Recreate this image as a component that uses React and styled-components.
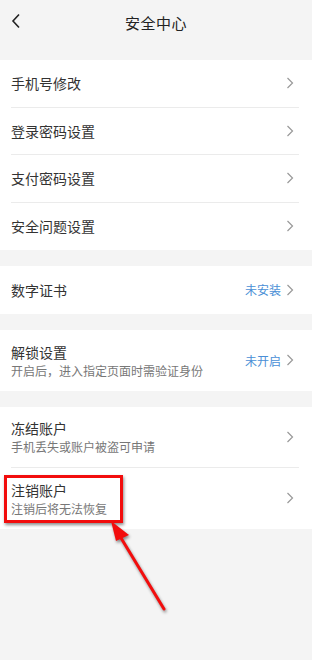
import React from "react";
import styled, { createGlobalStyle } from "styled-components";

const GlobalStyle = createGlobalStyle`
  html, body {
    margin: 0;
    padding: 0;
    background: #f4f4f4;
    font-family: "Noto Sans CJK SC", "Noto Sans", sans-serif;
  }
`;

const Page = styled.div`
  position: relative;
  width: 312px;
  min-height: 660px;
  background: #f4f4f4;
  overflow: hidden;
`;

const Header = styled.div`
  height: 44px;
  display: flex;
  align-items: center;
  justify-content: center;
  position: relative;
  margin-bottom: 16px;
`;

const BackBtn = styled.div`
  position: absolute;
  left: 8px;
  top: 12px;
  width: 16px;
  height: 18px;
  display: flex;
  align-items: center;
  justify-content: center;
`;

const Title = styled.div`
  font-size: 15px;
  color: #222;
  letter-spacing: 0.5px;
`;

const Section = styled.div`
  background: #fff;
  padding: 0 13px 0 11px;
  margin-bottom: 16px;
`;

const Row = styled.div`
  height: ${(p) => (p.$tall ? "61px" : "47.5px")};
  display: flex;
  align-items: center;
  padding-right: 5px;
  border-bottom: ${(p) => (p.$last ? "none" : "1px solid #ebebeb")};
  box-sizing: border-box;
`;

const Texts = styled.div`
  flex: 1;
  display: flex;
  flex-direction: column;
  position: relative;
`;

const Label = styled.div`
  font-size: 14px;
  color: #333;
  line-height: 20px;
`;

const Sub = styled.div`
  font-size: 12px;
  color: #777;
  line-height: 17px;
`;

const Status = styled.span`
  font-size: 12px;
  color: #4a8fd6;
  margin-right: 5px;
`;

const Highlight = styled.div`
  position: absolute;
  left: -7px;
  top: -5px;
  width: 113px;
  height: 42px;
  border: 3px solid #f20d0d;
  box-shadow: 1px 2px 3px rgba(0, 0, 0, 0.45);
  pointer-events: none;
`;

const Arrow = styled.svg`
  position: absolute;
  left: 100px;
  top: 515px;
  overflow: visible;
  filter: drop-shadow(1px 2px 1.5px rgba(0, 0, 0, 0.45));
`;

const Chevron = () => (
  <svg width="8" height="12" viewBox="0 0 8 12">
    <path d="M1.5 1 L6.5 6 L1.5 11" fill="none" stroke="#999" strokeWidth="1.2" />
  </svg>
);

const items = [
  { label: "手机号修改" },
  { label: "登录密码设置" },
  { label: "支付密码设置" },
  { label: "安全问题设置" },
];

const App = () => {
  return (
    <Page>
      <GlobalStyle />
      <Header>
        <BackBtn>
          <svg width="10" height="16" viewBox="0 0 10 16">
            <path d="M8 1.5 L2 8 L8 14.5" fill="none" stroke="#222" strokeWidth="1.6" />
          </svg>
        </BackBtn>
        <Title>安全中心</Title>
      </Header>

      <Section>
        {items.map((it, i) => (
          <Row key={it.label} $last={i === items.length - 1}>
            <Texts>
              <Label>{it.label}</Label>
            </Texts>
            <Chevron />
          </Row>
        ))}
      </Section>

      <Section>
        <Row $last>
          <Texts>
            <Label>数字证书</Label>
          </Texts>
          <Status>未安装</Status>
          <Chevron />
        </Row>
      </Section>

      <Section>
        <Row $last $tall>
          <Texts>
            <Label>解锁设置</Label>
            <Sub>开启后，进入指定页面时需验证身份</Sub>
          </Texts>
          <Status>未开启</Status>
          <Chevron />
        </Row>
      </Section>

      <Section>
        <Row $tall>
          <Texts>
            <Label>冻结账户</Label>
            <Sub>手机丢失或账户被盗可申请</Sub>
          </Texts>
          <Chevron />
        </Row>
        <Row $last $tall>
          <Texts>
            <Label>注销账户</Label>
            <Sub>注销后将无法恢复</Sub>
            <Highlight />
          </Texts>
          <Chevron />
        </Row>
      </Section>

      <Arrow width="70" height="100" viewBox="0 0 70 100">
        <line x1="64" y1="94" x2="18" y2="18" stroke="#f20d0d" strokeWidth="3" strokeLinecap="round" />
        <polygon points="11,6 29,20 16,26" fill="#f20d0d" />
      </Arrow>
    </Page>
  );
};

export default App;
